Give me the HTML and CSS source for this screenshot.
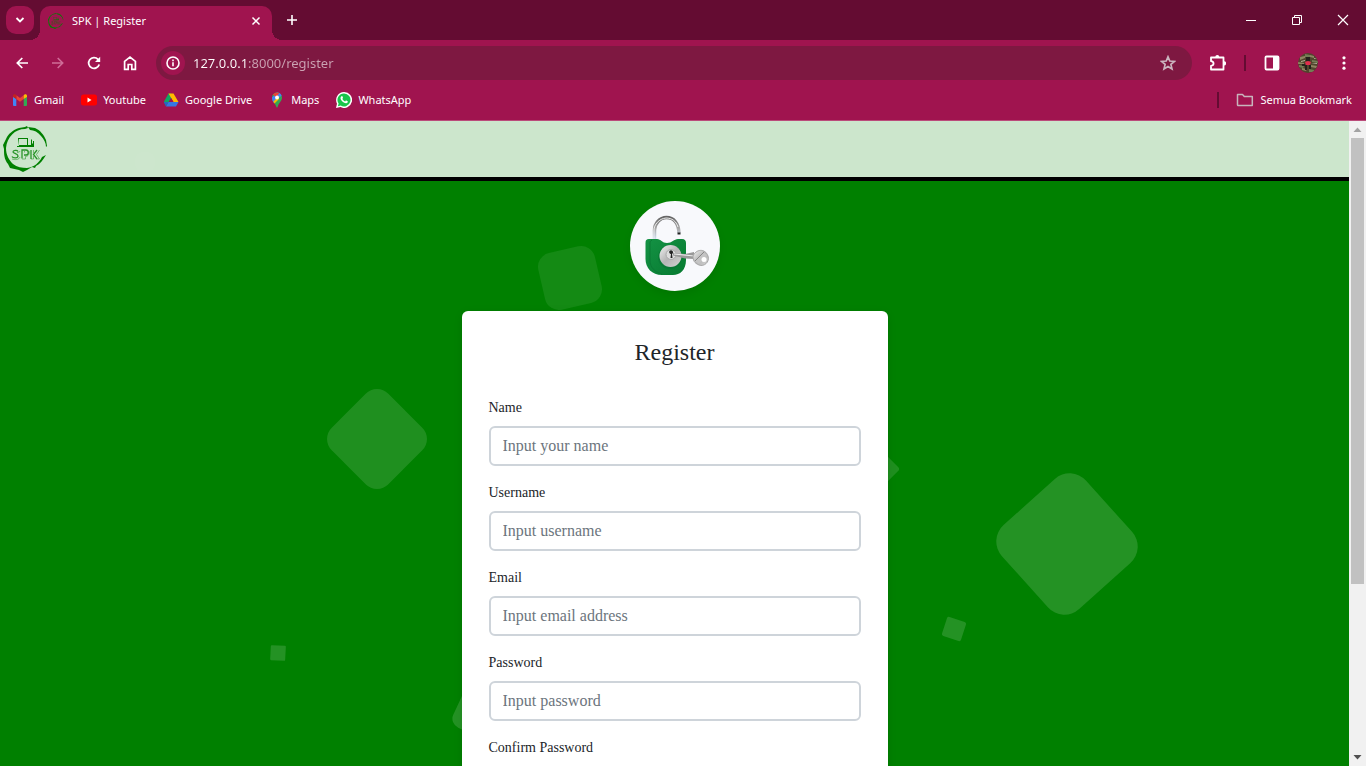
FILE: index.html
```html
<!DOCTYPE html>
<html lang="en">
<head>
<meta charset="utf-8">
<meta name="viewport" content="width=device-width, initial-scale=1">
<title>SPK | Register</title>
<link rel="stylesheet" href="styles.css">
</head>
<body>
<header class="browser">
  <div class="tabstrip">
    <button class="tab-search" aria-label="Search tabs"><svg width="10" height="10" viewBox="0 0 10 10"><path d="M1.5 3 5 6.500 8.500 3" fill="none" stroke="#fff" stroke-width="1.800"/></svg></button>
    <div class="tab">
      <svg class="logo-small" width="16" height="16" viewBox="0 0 46 46"><use href="#spk"/></svg>
      <span class="tab-title">SPK | Register</span>
      <button class="icon-btn" aria-label="Close tab"><svg width="10" height="10" viewBox="0 0 10 10"><path d="M1.500 1.500l7 7M8.500 1.500l-7 7" stroke="#fff" stroke-width="1.500"/></svg></button>
    </div>
    <button class="icon-btn new-tab" aria-label="New tab"><svg width="12" height="12" viewBox="0 0 12 12"><path d="M6 1v10M1 6h10" stroke="#fff" stroke-width="1.600"/></svg></button>
    <div class="window-controls">
      <button class="icon-btn" aria-label="Minimize"><svg width="12" height="12" viewBox="0 0 12 12"><path d="M1 6.500h10" stroke="#fff"/></svg></button>
      <button class="icon-btn" aria-label="Restore"><svg width="12" height="12" viewBox="0 0 12 12" fill="none" stroke="#fff"><path d="M1.500 3.500h7v7h-7zM3.500 3.500v-2h7v7h-2"/></svg></button>
      <button class="icon-btn" aria-label="Close"><svg width="12" height="12" viewBox="0 0 12 12"><path d="M1 1l10 10M11 1 1 11" stroke="#fff" stroke-width="1.200"/></svg></button>
    </div>
  </div>
  <div class="toolbar">
    <div class="nav-buttons">
      <button class="icon-btn" aria-label="Back"><svg width="16" height="16" viewBox="0 0 16 16" fill="none" stroke="#fff" stroke-width="1.700"><path d="M14 8H3.500M8.300 3 3.300 8l5 5"/></svg></button>
      <button class="icon-btn" aria-label="Forward"><svg width="16" height="16" viewBox="0 0 16 16" fill="none" stroke="#cf6d98" stroke-width="1.600"><path d="M2 8h10.500M7.700 3l5 5-5 5"/></svg></button>
      <button class="icon-btn" aria-label="Reload"><svg width="16" height="16" viewBox="0 0 16 16"><path d="M13.200 9.500A5.400 5.400 0 1 1 12 4.300l1 1.200" fill="none" stroke="#fff" stroke-width="1.800"/><path d="M14.200 1.800v5.200H9z" fill="#fff"/></svg></button>
      <button class="icon-btn" aria-label="Home"><svg width="16" height="16" viewBox="0 0 16 16" fill="none" stroke="#fff" stroke-width="1.700"><path d="M2.600 6.300 8 2l5.400 4.300v8h-3.600V9.500H6.200v4.800H2.600z"/></svg></button>
    </div>
    <form class="omnibox">
      <button type="button" class="site-info" aria-label="Site information"><svg width="16" height="16" viewBox="0 0 16 16"><circle cx="8" cy="8" r="6" fill="none" stroke="#fff" stroke-width="1.600"/><path d="M8 7.300v4M8 4.500v1.700" stroke="#fff" stroke-width="1.600"/></svg></button>
      <input class="address" type="text" value="127.0.0.1:8000/register" aria-label="Address">
      <button type="button" class="icon-btn" aria-label="Bookmark this page"><svg width="16" height="16" viewBox="0 0 16 16"><path d="m8 1.800 1.800 4.200 4.600.400-3.500 3 1.100 4.500L8 11.500l-4 2.400 1.100-4.500-3.500-3L6.200 6z" fill="none" stroke="#cbb5bf" stroke-width="1.700"/></svg></button>
    </form>
    <div class="tools">
      <button class="icon-btn" aria-label="Extensions"><svg width="18" height="18" viewBox="-1 0 18 18"><path d="M2 3.500h12.500v12H2v-3.700c3.400-.400 3.400-4.200 0-4.600z" fill="none" stroke="#fff" stroke-width="1.800" stroke-linejoin="round"/><path d="M6.300 3a2 2 0 0 1 4 0zM15 7.300a2 2 0 0 1 0 4.200z" fill="#fff"/></svg></button>
      <span class="divider"></span>
      <button class="icon-btn" aria-label="Side panel"><svg width="16" height="16" viewBox="0 0 16 16"><rect x="1.500" y="1.500" width="13" height="13" rx="1" fill="none" stroke="#fff" stroke-width="1.800"/><path d="M9 1h6v14H9z" fill="#fff"/></svg></button>
      <button class="icon-btn" aria-label="Profile"><svg width="20" height="20" viewBox="0 0 20 20"><clipPath id="av"><circle cx="10" cy="10" r="10"/></clipPath><g clip-path="url(#av)"><path fill="#51452d" d="M0 0h20v20H0z"/><path fill="#8f8462" d="m2 4 5-1v2l-5 2zm10-2 4 1v2l-4-1zM0 9l6 1v1H0zm13 3 6 1-1 2-5-1zm-9 3 5 1-1 2-4-1z"/><path fill="#737d55" d="m7 1 5 1v2H7zm7 6 6 1v2l-6-1zM1 12l5 1-1 2-4-1zm10 4 5 1v2h-5z"/><path fill="#b8b19c" d="m16 5 3 1h-3zM3 8l4-1v1L3 9zm10 3 6-1v1h-6z"/><path fill="#25201c" d="M8 4h4v4H8zM7 12h2v5H7zM11 12h2v4h-2zM4 11h3v2H4z"/><path fill="#e12c4d" d="m7 9 3-1 3 1-1 3H8z"/></g></svg></button>
      <button class="icon-btn" aria-label="Menu"><svg width="16" height="16" viewBox="0 0 16 16" fill="#fff"><circle cx="8" cy="2.800" r="1.600"/><circle cx="8" cy="8" r="1.600"/><circle cx="8" cy="13.200" r="1.600"/></svg></button>
    </div>
  </div>
  <nav class="bookmarks" aria-label="Bookmarks">
    <a class="bookmark" href="#"><svg width="16" height="16" viewBox="0 0 16 16"><path fill="#4285f4" d="M1 4.500 4.300 7v7H2a1 1 0 0 1-1-1z"/><path fill="#34a853" d="M11.700 7 15 4.500V13a1 1 0 0 1-1 1h-2.300z"/><path fill="#ea4335" d="M4.300 7V3.200L8 6l3.700-2.800V7L8 9.800z"/><path fill="#c5221f" d="M1 5V3.800c0-1.500 1.500-2.100 2.500-1.200l.8.600V7z"/><path fill="#fbbc04" d="M15 5V3.800c0-1.500-1.500-2.100-2.500-1.200l-.8.600V7z"/></svg>Gmail</a>
    <a class="bookmark" href="#"><svg width="16" height="16" viewBox="0 0 16 16"><rect y="2.500" width="16" height="11" rx="2.500" fill="#f00"/><path fill="#fff" d="m6.500 5.500 4 2.500-4 2.500z"/></svg>Youtube</a>
    <a class="bookmark" href="#"><svg width="16" height="16" viewBox="0 0 16 16"><path fill="#11a861" d="M5.500 1.500H8l2 3.500L3 14 .8 10z"/><path fill="#ffba00" d="M5.500 1.500h5L15.500 10H10.500z"/><path fill="#3777e3" d="M5.500 10h10L13 14.500H3z"/><path fill="#2b63c2" d="m.8 10 2.200 4.500L5.500 10z"/><path fill="#a0144f" d="m8 5.800 2.400 4.200H5.600z"/></svg>Google Drive</a>
    <a class="bookmark" href="#"><svg width="16" height="16" viewBox="0 0 16 16"><path fill="#34a853" d="M8 .5a5 5 0 0 1 5 5c0 4-3.300 5-4.200 9-.2 1.300-1.400 1.300-1.600 0C6.500 11.500 3 10 3 5.500a5 5 0 0 1 5-5z"/><path fill="#4285f4" d="M8 .5a5 5 0 0 1 4.600 3L5 11C3.900 9.500 3 8 3 5.500z"/><path fill="#ea4335" d="M8 .5a5 5 0 0 0-4 2l3 2.700 3.300-4A5 5 0 0 0 8 .5z"/><path fill="#fbbc04" d="m4.400 9.800 5.200-6L10 7l-4.500 4.500z"/><circle cx="8" cy="5.500" r="1.900" fill="#fff"/></svg>Maps</a>
    <a class="bookmark" href="#"><svg width="16" height="16" viewBox="0 0 16 16"><path fill="#fff" d="M8 0a8 8 0 1 1-3.600 15.100L0 16l1-4.300A8 8 0 0 1 8 0z"/><path fill="#18c54a" d="M8.100 1.400a6.500 6.500 0 1 1-3.400 12.100l-2.800.7.700-2.700A6.500 6.500 0 0 1 8.100 1.400z"/><path fill="#fff" d="M5.600 4.200c.6-.3.900 0 1.400 1.600.1.500-.5.700-.6 1.100.7 1.300 1.500 2 2.700 2.500.5-.2.700-1 1.200-.8 1.600.8 1.700.8 1.400 1.600-.8 2-4.200.8-6-1.400C4.300 6.900 4 5.100 5.600 4.200z"/></svg>WhatsApp</a>
    <span class="divider divider-push"></span>
    <a class="bookmark" href="#"><svg width="18" height="16" viewBox="0 0 18 16"><path d="M1.500 12.500v-10h5l1.800 2h8v9h-14a.8.800 0 0 1-.8-1z" fill="none" stroke="#c8b4bc" stroke-width="1.500" stroke-linejoin="round"/></svg>Semua Bookmark</a>
  </nav>
</header>
<div class="viewport">
  <main class="page">
    <div class="shapes" aria-hidden="true">
      <i class="shape shape-a"></i><i class="shape shape-b"></i><i class="shape shape-c"></i><i class="shape shape-d"></i><i class="shape shape-e"></i><i class="shape shape-f"></i><i class="shape shape-g"></i><i class="shape shape-h"></i>
    </div>
    <nav class="site-nav">
      <a href="#" aria-label="SPK home"><svg width="46" height="46" viewBox="0 0 46 46">
        <g id="spk" fill="green">
          <path d="M22 1 24 0l1 2-3 1C12 3 4 11 3 22c0 7 3 12 7 16 4 3 9 4 14 4 7-1 12-5 15-11l4-2c-3 5-6 9-10 11l-1 2-3-1-5 3-4 2-4-2-9-2-2-4c-4-5-4-10-4-15l-1-4 3-6C5 8 10 4 16 2z"/>
          <path d="m25 1 7 1c5 2 9 7 11 12l1 6-1 1c0-4-2-8-5-11-3-4-7-6-11-6z"/>
          <path d="M15 12h10v7h3v-5l1-1v4l1 1v-3h1v6H14v-1h2zm1 1v6h8v-6z" fill-rule="evenodd"/>
          <g fill="none" stroke="green" stroke-width="1.300" opacity=".8">
            <path d="M15 25.500c-1-2-5-1-5 .5s5 1.500 5 4-5 2.500-6 .5M19 32.500v-8.500h4c3 0 3 5 0 5h-2M28 24v9M34 24l-3.500 4.500L34 33"/>
          </g>
          <g fill="none" stroke="green" stroke-width=".8" opacity=".55">
            <path d="M17 25c0 1-2 1.500-3 1.500M17 31c-1 3-5 3-8 2M21.500 25v1.500M26 25c1 3-1 5.500-3.500 5.500V33H19M30.500 24v3M36.500 24l-3 4.500 3 4.500h-3M30.500 30v3H28"/>
          </g>
        </g></svg></a>
    </nav>
    <div class="content">
      <div class="badge">
        <svg width="90" height="90" viewBox="0 0 90 90">
          <defs>
            <linearGradient id="steel" x1="0" y1="0" x2="1" y2="1"><stop offset="0" stop-color="#f2f2f2"/><stop offset=".5" stop-color="#b5b5b5"/><stop offset="1" stop-color="#d4d4d4"/></linearGradient>
            <linearGradient id="shackle" x1="0" y1="0" x2="0" y2="1"><stop offset="0" stop-color="#666"/><stop offset=".5" stop-color="#aaa"/><stop offset="1" stop-color="#d6e7fa"/></linearGradient>
            <linearGradient id="body" x1="0" y1="0" x2="1" y2="1"><stop offset="0" stop-color="#149244"/><stop offset="1" stop-color="#067a30"/></linearGradient>
          </defs>
          <path d="M24.500 39V29c0-6 5-12.500 12-12.500S48.500 22 49 32" fill="none" stroke="url(#shackle)" stroke-width="3.500"/>
          <path d="M24 38V29c0-5 5-11.500 12-12 6 0 10 3 12 9" fill="none" stroke="#eee" stroke-width="1"/>
          <path d="M47.500 32.500h3" stroke="#222" stroke-width="2"/>
          <path d="M19 38h8c4 0 5 4 10 4s7-4 11-4h4c3 0 4 2 4 4v17c0 10-6 15-13 15H32c-10 0-16.500-7-16.500-16V42c0-3 1-4 3.500-4z" fill="url(#body)"/>
          <path d="M22 39c-2 1-2 2-2 4v16c0 8 5 12 12 14" fill="none" stroke="#0b7a35"/>
          <circle cx="40" cy="56" r="12" fill="#087033" opacity=".5"/>
          <circle cx="40.500" cy="55" r="11" fill="url(#steel)"/>
          <circle cx="41" cy="53.500" r="5" fill="#ddd" stroke="#aaa"/>
          <path d="M39.500 50a2 2 0 0 1 3 0 2 2 0 0 1-.5 3l.5 4h-2l.5-4a2 2 0 0 1-1.500-3z" fill="#222"/>
          <path d="m43 52 12 1 9-2v7l-9-.5-12-3z" fill="#999"/><path d="m44 53 20 2" stroke="#eee"/>
          <path d="M63 55c3-7 12-8 15 0 2 6-4 11-9 9-5-2-6-5-6-9z" fill="url(#steel)" stroke="#a5a5a5"/>
          <path d="m65 60 8-9 4 3-8 9z" fill="#c4c4c4"/><path d="m65 60 9-9" stroke="#888"/><circle cx="74" cy="58.500" r="2.500" fill="#fff"/>
        </svg>
      </div>
      <form class="card">
        <h1 class="card-title">Register</h1>
        <div class="field"><label for="name">Name</label><input class="text-input" id="name" type="text" placeholder="Input your name"></div>
        <div class="field"><label for="username">Username</label><input class="text-input" id="username" type="text" placeholder="Input username"></div>
        <div class="field"><label for="email">Email</label><input class="text-input" id="email" type="email" placeholder="Input email address"></div>
        <div class="field"><label for="password">Password</label><input class="text-input" id="password" type="password" placeholder="Input password"></div>
        <div class="field"><label for="confirm">Confirm Password</label><input class="text-input" id="confirm" type="password"></div>
      </form>
    </div>
  </main>
  <div class="scrollbar" aria-hidden="true">
    <svg width="17" height="17" viewBox="0 0 17 17"><path d="M8.500 6.500 12.500 11h-8z" fill="#a3a3a3"/></svg>
    <div class="scroll-track"><div class="scroll-thumb"></div></div>
    <svg width="17" height="17" viewBox="0 0 17 17"><path d="M8.500 10.500 12.500 6h-8z" fill="#505050"/></svg>
  </div>
</div>
</body>
</html>
```

FILE: styles.css
```css
* { box-sizing: border-box; }

body {
  margin: 0;
  height: 100vh;
  display: flex;
  flex-direction: column;
  overflow: hidden;
  font-family: "Liberation Serif", "Times New Roman", serif;
  color: #212529;
}

button { border: 0; padding: 0; background: none; color: inherit; }
svg { display: block; flex: none; }

/* Browser frame */
.browser {
  flex: none;
  background: #a0144f;
  border-bottom: 1px solid #bb4b7a;
  font: 11px/16px "Noto Sans", sans-serif;
  color: #fff;
}

.tabstrip {
  height: 40px;
  display: flex;
  align-items: center;
  background: #640c32;
  padding-left: 6px;
}

.icon-btn { display: grid; place-items: center; flex: none; }

.tab-search {
  display: grid;
  place-items: center;
  width: 28px;
  height: 28px;
  border-radius: 10px;
  background: #a0144f;
}

.tab {
  align-self: flex-end;
  width: 232px;
  height: 34px;
  margin-left: 6px;
  padding: 0 11px 4px 8px;
  display: flex;
  align-items: center;
  gap: 8px;
  border-radius: 10px 10px 0 0;
  background: #a0144f;
  position: relative;
}

.tab::before,
.tab::after {
  content: "";
  position: absolute;
  bottom: 0;
  width: 10px;
  height: 10px;
}
.tab::before { right: 100%; background: radial-gradient(circle at 0 0, transparent 10px, #a0144f 10px); }
.tab::after { left: 100%; background: radial-gradient(circle at 100% 0, transparent 10px, #a0144f 10px); }

.tab-title { flex: 1; }
.new-tab { margin-left: 14px; }

.window-controls { margin-left: auto; display: flex; }
.window-controls .icon-btn { width: 46px; height: 40px; }

.toolbar {
  height: 46px;
  display: flex;
  align-items: center;
  padding: 0 14px;
}

.nav-buttons { display: flex; gap: 20px; }

.omnibox {
  flex: 1;
  height: 34px;
  margin-left: 18px;
  padding: 0 16px 0 5px;
  display: flex;
  align-items: center;
  gap: 8px;
  border-radius: 17px;
  background: #7e1841;
}

.site-info {
  display: grid;
  place-items: center;
  width: 24px;
  height: 24px;
  border-radius: 50%;
  background: #a0144f;
}

.address {
  flex: 1;
  min-width: 0;
  border: 0;
  padding: 0;
  outline: 0;
  font: 13px/20px "Noto Sans", sans-serif;
  color: #fff;
  background: linear-gradient(to right, #fff 56px, #cba3b3 56px);
  -webkit-background-clip: text;
  background-clip: text;
  -webkit-text-fill-color: transparent;
}

.tools { display: flex; align-items: center; gap: 18px; margin-left: 16px; }

.divider { width: 2px; height: 16px; background: #640c32; }

.bookmarks {
  height: 34px;
  display: flex;
  align-items: center;
  gap: 17px;
  padding: 0 14px 6px 12px;
}

.bookmark {
  display: flex;
  align-items: center;
  gap: 6px;
  color: #fff;
  text-decoration: none;
  white-space: nowrap;
}

.divider-push { margin-left: auto; }

/* Web page */
.viewport { flex: 1; min-height: 0; display: flex; }

.page {
  flex: 1;
  position: relative;
  overflow: hidden;
  background: green;
}

.site-nav {
  position: relative;
  height: 60px;
  padding: 5px 3px;
  background: rgba(255, 255, 255, 0.8);
  border-bottom: 4px solid #000;
  background-clip: padding-box;
}
.site-nav a { display: inline-block; }

.shapes { position: absolute; inset: 0; }

.shape { position: absolute; translate: -50% -50%; background: rgba(255, 255, 255, 0.14); }
.shape-a { left: 570px; top: 157px; width: 58px; height: 58px; border-radius: 14px; rotate: -13deg; background: rgba(255, 255, 255, 0.08); }
.shape-b { left: 377px; top: 318px; width: 80px; height: 80px; border-radius: 16px; rotate: 45deg; background: rgba(255, 255, 255, 0.12); }
.shape-c { left: 1067px; top: 423px; width: 113px; height: 113px; border-radius: 22px; rotate: 48deg; }
.shape-d { left: 954px; top: 508px; width: 20px; height: 20px; border-radius: 2px; rotate: 18deg; }
.shape-e { left: 278px; top: 532px; width: 15px; height: 15px; border-radius: 1px; rotate: 3deg; }
.shape-f { left: 879px; top: 348px; width: 30px; height: 30px; border-radius: 3px; rotate: 45deg; background: rgba(255, 255, 255, 0.12); }
.shape-g { left: 489px; top: 588px; width: 60px; height: 60px; border-radius: 10px; rotate: 25deg; }
.shape-h { left: 145px; top: 41px; width: 20px; height: 20px; border-radius: 8px; background: rgba(255, 255, 255, 0.03); }

.content {
  position: relative;
  display: flex;
  flex-direction: column;
  align-items: center;
  gap: 20px;
  padding: 20px 16px;
}

.badge {
  width: 90px;
  height: 90px;
  border-radius: 50%;
  background: #f8f9fc;
  box-shadow: 0 4px 8px rgba(0, 0, 0, 0.08);
}

.card {
  width: 100%;
  max-width: 426px;
  padding: 26px 27px;
  border-radius: 6px;
  background: #fff;
  box-shadow: 0 2px 8px rgba(0, 0, 0, 0.1);
}

.card-title {
  margin: 0 0 30px;
  font-size: 24px;
  line-height: 30px;
  font-weight: 400;
  text-align: center;
}

.field { margin-bottom: 16px; }

.field label {
  display: block;
  margin-bottom: 8px;
  font-size: 14px;
  line-height: 21px;
}

.text-input {
  display: block;
  width: 100%;
  height: 40px;
  padding: 0 12px;
  border: 2px solid #ced4da;
  border-radius: 6px;
  background: #fff;
  font: 16px/24px "Liberation Serif", "Times New Roman", serif;
  color: #212529;
}
.text-input::placeholder { color: #6c757d; opacity: 1; }

.scrollbar {
  flex: none;
  width: 17px;
  display: flex;
  flex-direction: column;
  background: #f1f1f1;
}
.scroll-track { flex: 1; padding: 0 2px; }
.scroll-thumb { height: 73%; background: #c1c1c1; }
```
